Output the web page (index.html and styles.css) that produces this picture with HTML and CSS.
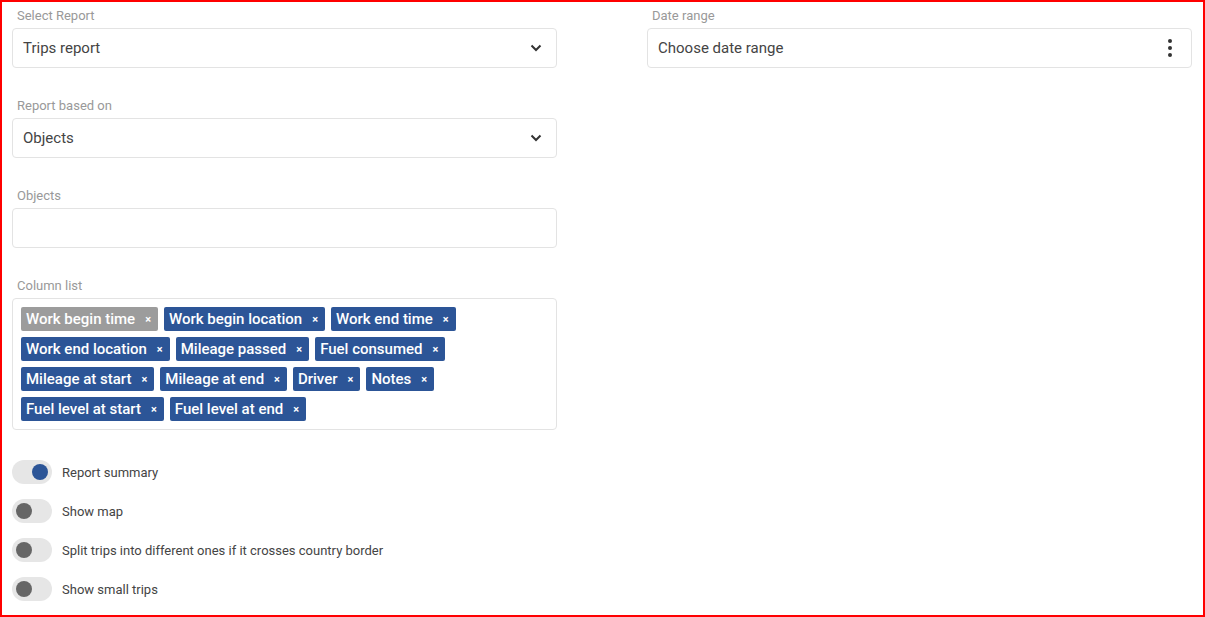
FILE: index.html
```html
<!DOCTYPE html>
<html lang="en">
<head>
    <meta charset="UTF-8">
    <title>Trips report</title>
    <link rel="stylesheet" href="styles.css">
</head>
<body>
    <div class="page">
        <div class="columns">
            <div class="col">
                <div class="field">
                    <label class="field-label">Select Report</label>
                    <div class="select">
                        <span>Trips report</span>
                        <svg class="chevron" width="12" height="8" viewBox="0 0 12 8"><polyline points="1.5,1.5 6,6 10.5,1.5" fill="none" stroke="#333" stroke-width="2"/></svg>
                    </div>
                </div>
                <div class="field">
                    <label class="field-label">Report based on</label>
                    <div class="select">
                        <span>Objects</span>
                        <svg class="chevron" width="12" height="8" viewBox="0 0 12 8"><polyline points="1.5,1.5 6,6 10.5,1.5" fill="none" stroke="#333" stroke-width="2"/></svg>
                    </div>
                </div>
                <div class="field">
                    <label class="field-label">Objects</label>
                    <div class="select"></div>
                </div>
                <div class="field">
                    <label class="field-label">Column list</label>
                    <div class="tags">
                        <span class="tag tag-muted">Work begin time <b>×</b></span>
                        <span class="tag">Work begin location <b>×</b></span>
                        <span class="tag">Work end time <b>×</b></span>
                        <span class="tag">Work end location <b>×</b></span>
                        <span class="tag">Mileage passed <b>×</b></span>
                        <span class="tag">Fuel consumed <b>×</b></span>
                        <span class="tag">Mileage at start <b>×</b></span>
                        <span class="tag">Mileage at end <b>×</b></span>
                        <span class="tag">Driver <b>×</b></span>
                        <span class="tag">Notes <b>×</b></span>
                        <span class="tag">Fuel level at start <b>×</b></span>
                        <span class="tag">Fuel level at end <b>×</b></span>
                    </div>
                </div>

                <div class="toggles">
                    <div class="toggle-row">
                        <span class="switch on"><span class="knob"></span></span>
                        <span>Report summary</span>
                    </div>
                    <div class="toggle-row">
                        <span class="switch"><span class="knob"></span></span>
                        <span>Show map</span>
                    </div>
                    <div class="toggle-row">
                        <span class="switch"><span class="knob"></span></span>
                        <span>Split trips into different ones if it crosses country border</span>
                    </div>
                    <div class="toggle-row">
                        <span class="switch"><span class="knob"></span></span>
                        <span>Show small trips</span>
                    </div>
                </div>
            </div>

            <div class="col">
                <div class="field">
                    <label class="field-label">Date range</label>
                    <div class="select">
                        <span>Choose date range</span>
                        <svg class="dots" width="4" height="18" viewBox="0 0 4 18"><circle cx="2" cy="2" r="2" fill="#333"/><circle cx="2" cy="9" r="2" fill="#333"/><circle cx="2" cy="16" r="2" fill="#333"/></svg>
                    </div>
                </div>
            </div>
        </div>
    </div>
</body>
</html>
```

FILE: styles.css
```css
html, body {
    margin: 0;
    background: white;
}
body {
    font-family: Roboto, "Liberation Sans", sans-serif;
    color: #444;
}
.page {
    box-sizing: border-box;
    width: 1205px;
    height: 617px;
    border: 2px solid #f00;
    padding: 5px 10px;
}
.columns {
    display: grid;
    grid-template-columns: 545px 545px;
    column-gap: 90px;
}
.field {
    margin-bottom: 29px;
}
.field-label {
    display: block;
    font-size: 13px;
    line-height: 18px;
    color: #999;
    margin: 0 0 3px 5px;
}
.select {
    box-sizing: border-box;
    height: 40px;
    border: 1px solid #e3e3e3;
    border-radius: 4px;
    display: flex;
    align-items: center;
    justify-content: space-between;
    padding: 0 14px 0 10px;
    font-size: 15px;
    color: #444;
}
.dots {
    margin-right: 5px;
}
.tags {
    box-sizing: border-box;
    border: 1px solid #e3e3e3;
    border-radius: 4px;
    padding: 8px 8px 2px;
    display: flex;
    flex-wrap: wrap;
    width: 100%;
}
.tag {
    display: inline-flex;
    align-items: center;
    height: 24px;
    padding: 0 7px 0 5px;
    margin: 0 6px 6px 0;
    background: #2c5597;
    color: white;
    border-radius: 2px;
    font-size: 15px;
    font-weight: 500;
}
.tag b {
    font-size: 11px;
    font-weight: 700;
    margin-left: 10px;
}
.tag-muted {
    background: #9c9c9c;
}
.toggles {
    margin-top: 30px;
}
.toggle-row {
    display: flex;
    align-items: center;
    height: 24px;
    margin-bottom: 15px;
    font-size: 13px;
    color: #444;
}
.switch {
    position: relative;
    width: 40px;
    height: 24px;
    border-radius: 12px;
    background: #e6e6e6;
    margin-right: 10px;
}
.knob {
    position: absolute;
    top: 4px;
    left: 4px;
    width: 16px;
    height: 16px;
    border-radius: 50%;
    background: #666;
}
.switch.on .knob {
    left: 20px;
    background: #2c5597;
}
```
